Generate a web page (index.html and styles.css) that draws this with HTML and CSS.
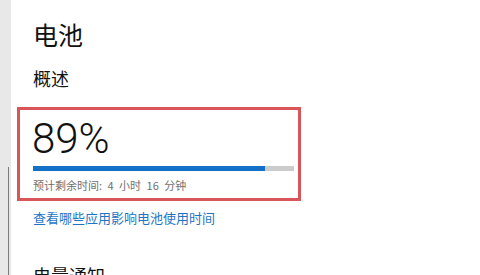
FILE: index.html
```html
<!DOCTYPE html>
<html lang="zh-CN">
<head>
<meta charset="utf-8">
<link rel="stylesheet" href="styles.css">
</head>
<body>
<div class="app">
  <div class="rail"><div class="thumb"></div></div>
  <main class="main">
    <h1 class="title">电池</h1>
    <h2 class="section">概述</h2>
    <div class="card">
      <div class="pct">89%</div>
      <div class="bar"><div class="fill" style="width:89%"></div></div>
      <div class="remain">预计剩余时间:&nbsp;4 小时 16 分钟</div>
    </div>
    <a class="link" href="#">查看哪些应用影响电池使用时间</a>
    <h2 class="section2">电量通知</h2>
  </main>
</div>
</body>
</html>
```
FILE: styles.css
```css
html, body {
  margin: 0;
  padding: 0;
  background: #ffffff;
  height: 100%;
  overflow: hidden;
}
.app {
  display: flex;
  height: 275px;
  font-family: "Noto Sans CJK SC", "Noto Sans", sans-serif;
  color: #111111;
}
.rail {
  width: 11px;
  flex: none;
  background: #e8e8e8;
  display: flex;
  flex-direction: column;
  padding-top: 167px;
  box-sizing: border-box;
}
.thumb {
  width: 1px;
  margin-left: 8px;
  flex: 1;
  background: #7c7c7c;
}
.main {
  flex: 1;
  padding: 18px 0 0 22px;
  display: flex;
  flex-direction: column;
  align-items: flex-start;
}
.title {
  margin: 0;
  font-size: 25px;
  line-height: 32px;
  font-weight: 400;
}
.section {
  margin: 16px 0 0;
  font-size: 18px;
  line-height: 24px;
  font-weight: 400;
}
.card {
  margin: 17px 0 0 -16px;
  width: 284px;
  box-sizing: border-box;
  border: 3px solid #d9555a;
  padding: 8px 4px 5px 13px;
}
.pct {
  font-family: "Roboto", "Open Sans", sans-serif;
  font-weight: 300;
  font-size: 42px;
  line-height: 42px;
  color: #111111;
  margin-left: -1px;
}
.bar {
  margin-top: 6px;
  height: 5px;
  background: #cccccc;
}
.fill {
  height: 100%;
  background: #1470c6;
}
.remain {
  margin-top: 7px;
  font-size: 11px;
  line-height: 15px;
  word-spacing: 3px;
  color: #707070;
}
.link {
  margin-top: 8px;
  font-size: 13px;
  line-height: 18px;
  color: #1f74c4;
  text-decoration: none;
}
.section2 {
  margin: 36px 0 0;
  font-size: 18px;
  line-height: 24px;
  font-weight: 400;
}
```
